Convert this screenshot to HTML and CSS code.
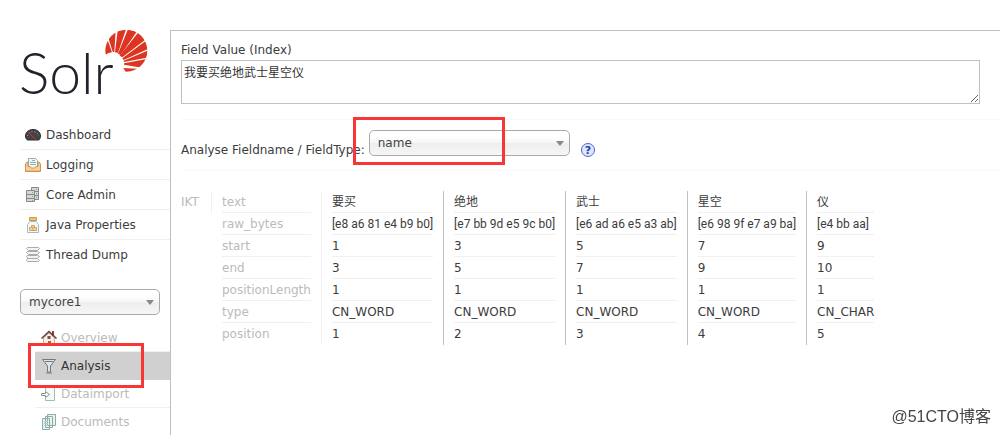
FILE: index.html
```html
<!DOCTYPE html>
<html lang="en">
<head>
  <meta charset="UTF-8">
  <meta name="viewport" content="width=device-width, initial-scale=1.0">
  <title>Solr Admin</title>
  <link rel="stylesheet" href="styles.css">
</head>
<body>
  <div class="wrapper">
    <aside class="sidebar">
      <a href="#" class="logo">
        <svg width="130" height="90" viewBox="0 0 130 90">
          <text class="logo-text" x="-1" y="64">Solr</text>
          <clipPath id="sun"><circle cx="349" cy="92" r="63"/></clipPath>
          <g fill="#dc3522" clip-path="url(#sun)" transform="translate(-10 -10) scale(.3333)">
            <path d="M280 72L292 58L306 97Q296 98 286 104Z"/>
            <path d="M294 50L317 30L313 97L308 95Z"/>
            <path d="M324 25L349 25L324 99L315 97Z"/>
            <path d="M355 25L384 30L332 105L324 101Z"/>
            <path d="M389 32L408 58L337 112L329 107Z"/>
            <path d="M408 62L418 85L341 120L337 115Z"/>
            <path d="M415 91L415 112L342 126L341 122Z"/>
            <path d="M410 117L396 143L342 134L342 130Z"/>
            <path d="M392 147L350 160L340 144Z"/>
          </g>
        </svg>
      </a>

      <ul class="menu">
        <li><a href="#">
          <svg width="16" height="16" viewBox="0 0 16 16">
            <path fill="#444" stroke="#2c2c2c" d="M.5 9C.5 5 4 2.500 8 2.500S15.500 5 15.500 9c0 2-1 4-2 4H3C1.500 13 .5 11 .5 9Z"/>
            <path stroke="#999" stroke-dasharray="1 2" fill="none" d="M2.500 9C3 3 13 3 13.500 9"/>
            <path stroke="#e22" d="M3.500 5.500l7 7"/>
          </svg>
          Dashboard</a></li>
        <li><a href="#">
          <svg width="16" height="16" viewBox="0 0 16 16">
            <path fill="#f0f7f7" stroke="#8fb0b4" d="M3.500 10V1.500h7l2 2V10"/>
            <path stroke="#8fb4b4" d="M7 3.500h3M5 5.500h6M5 7.500h6"/>
            <path fill="#f6cf9c" stroke="#cf9455" d="M.5 14.500V7l1.500-2H3v4.500h2l1 1.500h4l1-1.500h2V5h1l1.500 2v7.500Z"/>
            <path stroke="#f0b878" d="M1 13.500h14"/>
          </svg>
          Logging</a></li>
        <li><a href="#">
          <svg width="16" height="16" viewBox="0 0 16 16">
            <path fill="#d5d8da" stroke="#888" d="M6.500 .5h7v12h-7z"/>
            <path stroke="#888" d="M7 4.500h6M7 8.500h6"/>
            <path fill="#d5d8da" stroke="#888" d="M1.500 3.500h8v11h-8z"/>
            <path stroke="#888" d="M2 7.500h7M2 11.500h7"/>
            <path stroke="#6fba6f" d="M7 5.500h1M7 9.500h1M7 13.500h1M11 2.500h1M11 6.500h1M11 10.500h1"/>
          </svg>
          Core Admin</a></li>
        <li><a href="#">
          <svg width="16" height="16" viewBox="0 0 16 16">
            <path fill="#f2f9fc" stroke="#a3b9c5" d="M5 4.500h6l2.500 3v8h-11v-8Z"/>
            <path fill="#edc36b" stroke="#c79b50" d="M4.500 .5h7v3h-7z"/>
            <path fill="#f0d29a" stroke="#d3a65d" d="M4.500 13.500v-3h2v-2h3v2h2v3ZM6.500 10.500h3M8 11v2"/>
          </svg>
          Java Properties</a></li>
        <li><a href="#">
          <svg width="16" height="16" viewBox="0 0 16 16">
            <g fill="#f4f4f4" stroke="#aaa">
              <path d="M2.500 11.500l-1 2 1 1h11l1-1-2-2Z"/>
              <path d="M2.500 8.500l-1 1 2 2h9l2-2-2-1Z"/>
              <path d="M2.500 4.500l-1 1 2 2h9l2-2-2-1Z"/>
              <path d="M2.500 .5l-1 1 2 2h9l2-2-1-1Z"/>
            </g>
          </svg>
          Thread Dump</a></li>
      </ul>

      <div class="select core-select">
        <select aria-label="Core Selector">
          <option>mycore1</option>
        </select>
      </div>

      <ul class="core-menu">
        <li><a href="#">
          <svg width="16" height="16" viewBox="0 0 16 16">
            <path fill="#a03c2c" d="M11 1h2v5h-2z"/>
            <path fill="#fdeedd" stroke="#c9ada0" d="M2.500 8L8 3l5.500 5v7.500h-11Z"/>
            <path fill="none" stroke="#5d4038" stroke-width="1.500" d="M.5 8.500L8 1.500l7.500 7"/>
            <path fill="#b5622d" d="M7 11h3v4H7z"/>
            <path fill="#6b5560" d="M6.500 6h3v3h-3z"/>
          </svg>
          Overview</a></li>
        <li class="active"><a href="#">
          <svg width="16" height="16" viewBox="0 0 16 16">
            <path fill="#e2e2ea" stroke="#777" d="M1.500 1.500h13L9.500 8v6h-3V8ZM4 3.500h8M5 15h6"/>
          </svg>
          Analysis</a></li>
        <li><a href="#">
          <svg width="16" height="16" viewBox="0 0 16 16">
            <path fill="#f4f9f9" stroke="#a5b9b9" d="M4.500 5V1.500h9v13h-9V12"/>
            <path fill="#fff" stroke="#7c9292" d="M.5 7.500h4v-2l4 3-4 3v-2h-4Z"/>
          </svg>
          Dataimport</a></li>
        <li><a href="#">
          <svg width="16" height="16" viewBox="0 0 16 16">
            <path fill="#e8f3f0" stroke="#8caca8" d="M6.500 .5h8v11h-8zM4.500 2.500h7v11h-7zM1.500 4.500h7v11h-7z"/>
            <path stroke="#b5cccc" d="M3 7.500h4M3 9.500h4M3 11.500h4"/>
          </svg>
          Documents</a></li>
      </ul>
    </aside>

    <main class="content">
      <form class="analysis-form">
        <label for="fieldValue">Field Value (Index)</label>
        <textarea id="fieldValue">我要买绝地武士星空仪</textarea>

        <div class="type-row">
          <label for="fieldType">Analyse Fieldname / FieldType:</label>
          <div class="select type-select">
            <select id="fieldType">
              <option>name</option>
            </select>
          </div>
          <a href="#" class="help" aria-label="Help">
            <svg width="16" height="16" viewBox="0 0 16 16">
              <circle cx="8" cy="8" r="6.500" fill="#dfe8fa" stroke="#4a68c8"/>
              <text class="help-mark" x="8" y="12" text-anchor="middle">?</text>
            </svg>
          </a>
        </div>
      </form>

      <table class="result">
        <tbody>
          <tr>
            <th class="step"><div>IKT</div></th>
            <th><div>text</div></th>
            <td><div>要买</div></td>
            <td><div>绝地</div></td>
            <td><div>武士</div></td>
            <td><div>星空</div></td>
            <td><div>仪</div></td>
          </tr>
          <tr class="raw-bytes">
            <td class="blank" rowspan="6"></td>
            <th class="first"><div>raw_bytes</div></th>
            <td><div>[e8 a6 81 e4 b9 b0]</div></td>
            <td><div>[e7 bb 9d e5 9c b0]</div></td>
            <td><div>[e6 ad a6 e5 a3 ab]</div></td>
            <td><div>[e6 98 9f e7 a9 ba]</div></td>
            <td><div>[e4 bb aa]</div></td>
          </tr>
          <tr>
            <th class="first"><div>start</div></th>
            <td><div>1</div></td>
            <td><div>3</div></td>
            <td><div>5</div></td>
            <td><div>7</div></td>
            <td><div>9</div></td>
          </tr>
          <tr>
            <th class="first"><div>end</div></th>
            <td><div>3</div></td>
            <td><div>5</div></td>
            <td><div>7</div></td>
            <td><div>9</div></td>
            <td><div>10</div></td>
          </tr>
          <tr>
            <th class="first"><div>positionLength</div></th>
            <td><div>1</div></td>
            <td><div>1</div></td>
            <td><div>1</div></td>
            <td><div>1</div></td>
            <td><div>1</div></td>
          </tr>
          <tr>
            <th class="first"><div>type</div></th>
            <td><div>CN_WORD</div></td>
            <td><div>CN_WORD</div></td>
            <td><div>CN_WORD</div></td>
            <td><div>CN_WORD</div></td>
            <td><div>CN_CHAR</div></td>
          </tr>
          <tr>
            <th class="first"><div>position</div></th>
            <td><div>1</div></td>
            <td><div>2</div></td>
            <td><div>3</div></td>
            <td><div>4</div></td>
            <td><div>5</div></td>
          </tr>
        </tbody>
      </table>
    </main>
  </div>
  <div class="watermark">@51CTO博客</div>
</body>
</html>
```
FILE: styles.css
```css
* {
  box-sizing: border-box;
}

body {
  margin: 0;
  background: #fff;
  color: #3c3c3c;
  font-family: "DejaVu Sans", Verdana, "Noto Sans CJK SC", sans-serif;
  font-size: 12px;
  line-height: 20px;
}

a {
  color: inherit;
  text-decoration: none;
}

ul {
  list-style: none;
  margin: 0;
  padding: 0;
}

.wrapper {
  display: flex;
  min-height: 100vh;
  padding: 30px 0 0 20px;
}

/* sidebar */
.sidebar {
  flex: 0 0 150px;
}

.logo {
  display: block;
  height: 90px;
}

.logo svg {
  display: block;
  overflow: visible;
}

.logo-text {
  font-family: Lato, sans-serif;
  font-size: 57px;
  font-weight: 300;
  fill: #22222c;
}

.menu a,
.core-menu a {
  display: flex;
  align-items: center;
  gap: 5px;
}

.menu a {
  height: 30px;
  padding-left: 5px;
  border-bottom: 1px solid #f0f0f0;
}

.menu li:last-child a,
.core-menu li:last-child a {
  border-bottom: 0;
}

.select {
  position: relative;
  height: 26px;
}

.select select {
  appearance: none;
  display: block;
  width: 100%;
  height: 100%;
  padding: 0 8px;
  border: 1px solid #aaa;
  border-radius: 5px;
  background: linear-gradient(#fff 20%, #f6f6f6 50%, #eee 52%, #f6f6f6 100%);
  color: #444;
  font: inherit;
}

.select::after {
  content: "";
  position: absolute;
  top: 11px;
  right: 6px;
  border: 4px solid transparent;
  border-top: 5px solid #888;
  border-bottom: 0;
  pointer-events: none;
}

.core-select {
  margin: 19px 10px 0 0;
}

.core-menu {
  margin: 9px 0 0 15px;
  color: #bbb;
}

.core-menu a {
  height: 28px;
  padding-left: 6px;
  gap: 4px;
  border-bottom: 1px solid #f0f0f0;
}

.core-menu .active a {
  background: #d0d0d0;
  border-color: #d0d0d0;
  color: #333;
}

/* red frames round the picked entries */
.active,
.type-select {
  position: relative;
}

.active::before,
.type-select::before {
  content: "";
  position: absolute;
  z-index: 1;
  border: 3px solid #f93636;
  pointer-events: none;
}

.active::before {
  inset: -9px 26px -8px -7px;
}

.type-select::before {
  inset: -13px 65px -9px -16px;
}

/* analysis */
.content {
  flex: 1;
  min-width: 0;
  padding: 10px 0 0 10px;
  border: solid #c0c0c0;
  border-width: 1px 0 0 1px;
}

.analysis-form > label {
  display: block;
  line-height: 19px;
}

.analysis-form textarea {
  display: block;
  width: calc(100% - 20px);
  height: 44px;
  padding: 2px;
  border: 1px solid #c0c0c0;
  color: #333;
  font: inherit;
}

.type-row {
  display: flex;
  align-items: center;
  height: 52px;
  margin: 15px 0 20px;
  border: solid #f9f9f9;
  border-width: 1px 0;
}

.type-row label {
  padding-top: 10px;
}

.type-select {
  width: 201px;
  margin: 0 10px 4px 4px;
}

.help {
  padding-top: 10px;
}

.help svg {
  display: block;
}

.help-mark {
  fill: #2340b0;
  font-size: 11px;
  font-weight: bold;
}

.result {
  border-collapse: separate;
  border-spacing: 0;
}

.result th,
.result td {
  height: 22px;
  padding: 0 10px;
  border-left: 1px solid #c0c0c0;
  font-weight: normal;
  text-align: left;
  white-space: nowrap;
}

.result div {
  height: 22px;
  line-height: 22px;
  border-bottom: 1px solid #f0f0f0;
}

.result tr:last-child div,
.result .step div {
  border-bottom: 0;
}

.result th {
  color: #bbb;
}

.result th,
.result th + td {
  border-left-color: #f0f0f0;
}

.result .step,
.result .blank {
  min-width: 30px;
  padding-left: 0;
  border-left: 0;
}

.result .first {
  border-left-color: transparent;
}

.result .raw-bytes td {
  font-family: Roboto, sans-serif;
}

.watermark {
  position: fixed;
  right: 9px;
  bottom: 8px;
  color: #444;
  font-family: "Liberation Sans", "Noto Sans CJK SC", sans-serif;
  font-size: 16px;
}
```
